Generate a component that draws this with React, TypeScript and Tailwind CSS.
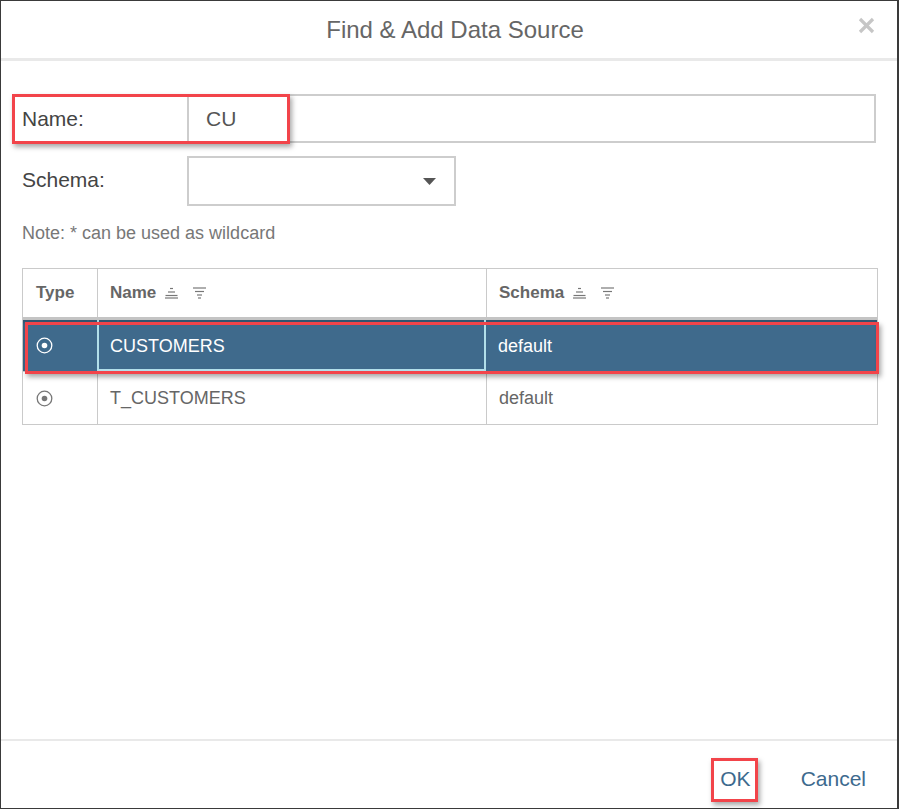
import React from "react";

const SortAsc = () => (
  <svg width="13" height="12" viewBox="0 0 13 12" className="block">
    <g stroke="#777" strokeWidth="1.2">
      <line x1="5" y1="1.5" x2="8" y2="1.5" />
      <line x1="3" y1="5" x2="10" y2="5" />
      <line x1="0.5" y1="8.5" x2="12.5" y2="8.5" />
      <line x1="0" y1="11" x2="13" y2="11" />
    </g>
  </svg>
);

const SortFilter = () => (
  <svg width="13" height="12" viewBox="0 0 13 12" className="block">
    <g stroke="#777" strokeWidth="1.2">
      <line x1="0" y1="1" x2="13" y2="1" />
      <line x1="2" y1="4.5" x2="11" y2="4.5" />
      <line x1="4" y1="8" x2="9" y2="8" />
      <line x1="5" y1="11" x2="8" y2="11" />
    </g>
  </svg>
);

const Radio = ({ color }: { color: string }) => (
  <svg width="17" height="17" viewBox="0 0 17 17">
    <circle cx="8.5" cy="8.5" r="7.3" fill="none" stroke={color} strokeWidth="1.3" />
    <circle cx="8.5" cy="8.5" r="2.8" fill={color} />
  </svg>
);

type Row = { name: string; schema: string; selected?: boolean };

const rows: Row[] = [
  { name: "CUSTOMERS", schema: "default", selected: true },
  { name: "T_CUSTOMERS", schema: "default" },
];

const HeaderLabel = ({ text }: { text: string }) => (
  <div className="flex items-center">
    <span>{text}</span>
    <span className="ml-[9px]"><SortAsc /></span>
    <span className="ml-[15px]"><SortFilter /></span>
  </div>
);

export default function App() {
  return (
    <div className="relative w-[899px] h-[809px] bg-white border-l border-t border-b border-r-2 border-[#3a3a3a] flex flex-col font-['Liberation_Sans',Arial,sans-serif]">
      {/* header */}
      <div className="relative h-[60px] flex items-center justify-center pl-[12px] border-b-[3px] border-[#e9e9e9]">
        <span className="text-[24px] text-[#666]">Find &amp; Add Data Source</span>
        <button className="absolute right-[22px] top-[16px]">
          <svg width="17" height="17" viewBox="0 0 17 17">
            <g stroke="#c6c6c6" strokeWidth="3.2">
              <line x1="2" y1="2" x2="15" y2="15" />
              <line x1="15" y1="2" x2="2" y2="15" />
            </g>
          </svg>
        </button>
      </div>

      {/* body */}
      <div className="flex-1 px-[21px] pt-[33px]">
        <div className="flex items-center">
          <label className="w-[165px] text-[21px] text-[#444]">Name:</label>
          <div className="flex-1 h-[49px] border-2 border-[#cdcdcd] flex items-center pl-[17px] text-[21px] text-[#555]">
            CU
          </div>
        </div>

        <div className="flex items-center mt-[13px]">
          <label className="w-[165px] text-[21px] text-[#444] -mt-[2px]">Schema:</label>
          <div className="w-[269px] h-[50px] border-2 border-[#cdcdcd] flex items-center justify-end pr-[18px]">
            <svg width="13" height="7" viewBox="0 0 13 7">
              <polygon points="0,0 13,0 6.5,7" fill="#555" />
            </svg>
          </div>
        </div>

        <div className="mt-[14px] text-[18px] text-[#777]">Note: * can be used as wildcard</div>

        {/* grid */}
        <div className="mt-[21px] w-[856px] border border-[#cacaca] text-[18px]">
          <div className="flex h-[51px] border-b-[3px] border-[#c4c4c4] font-bold text-[17px] text-[#666]">
            <div className="w-[74px] flex items-center pl-[13px]">Type</div>
            <div className="w-[389px] border-l border-[#cacaca] flex items-center pl-[12px]">
              <HeaderLabel text="Name" />
            </div>
            <div className="flex-1 border-l border-[#cacaca] flex items-center pl-[12px]">
              <HeaderLabel text="Schema" />
            </div>
          </div>
          {rows.map((r) =>
            r.selected ? (
              <div key={r.name} className="flex h-[51px] bg-[#3f6a8c] text-white shadow-[inset_0_3px_3px_rgba(0,0,0,0.2)]">
                <div className="w-[74px] flex items-center pl-[13px]">
                  <Radio color="#ffffff" />
                </div>
                <div className="w-[389px] border-l-2 border-r-2 border-b-2 border-[#b2dfea] flex items-center pl-[11px] pt-[3px]">
                  {r.name}
                </div>
                <div className="flex-1 flex items-center pl-[12px] pt-[1px]">{r.schema}</div>
              </div>
            ) : (
              <div key={r.name} className="flex h-[53px] border-t border-[#cacaca] text-[#666]">
                <div className="w-[74px] flex items-center pl-[13px]">
                  <Radio color="#777777" />
                </div>
                <div className="w-[389px] border-l border-[#cacaca] flex items-center pl-[12px]">{r.name}</div>
                <div className="flex-1 border-l border-[#cacaca] flex items-center pl-[12px]">{r.schema}</div>
              </div>
            )
          )}
        </div>
      </div>

      {/* footer */}
      <div className="h-[69px] border-t-2 border-[#e9e9e9] flex items-center justify-end gap-[50px] pr-[31px] pt-[8px] text-[21px] text-[#3d6a8e]">
        <button>OK</button>
        <button>Cancel</button>
      </div>

      {/* annotation highlights */}
      <div className="absolute left-[11px] top-[93px] w-[278px] h-[50px] border-[3px] border-[#f2444a] shadow-[2px_3px_5px_rgba(0,0,0,0.35)] pointer-events-none" />
      <div className="absolute left-[24px] top-[321px] w-[854px] h-[52px] border-[3px] border-[#f2444a] shadow-[2px_3px_5px_rgba(0,0,0,0.35)] pointer-events-none" />
      <div className="absolute left-[710px] top-[757px] w-[47px] h-[44px] border-[3px] border-[#f2444a] shadow-[2px_3px_5px_rgba(0,0,0,0.35)] pointer-events-none" />
    </div>
  );
}
